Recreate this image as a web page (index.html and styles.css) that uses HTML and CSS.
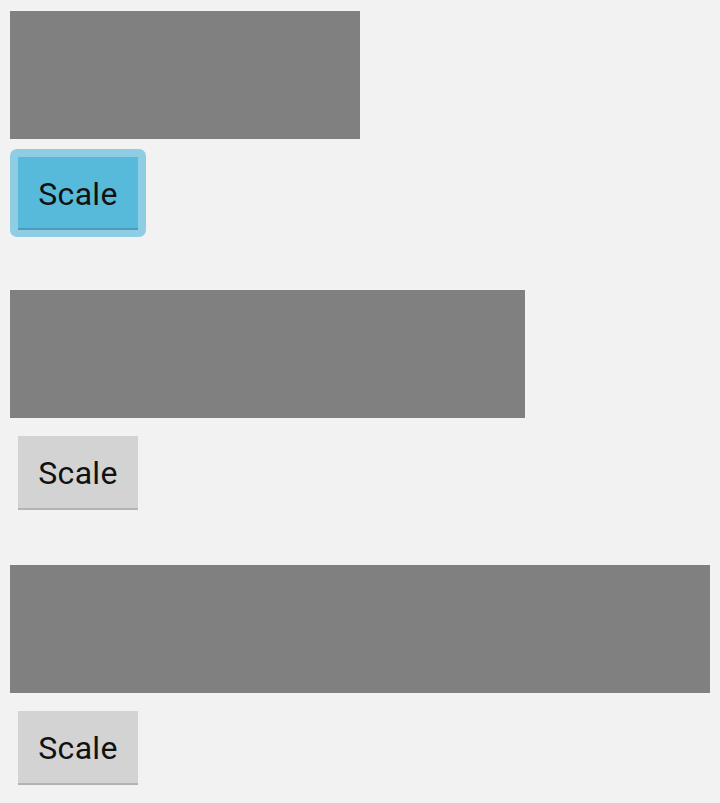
FILE: index.html
```html
<!DOCTYPE html>
<html>
<head>
<meta charset="utf-8">
<link rel="stylesheet" href="styles.css">
</head>
<body>
<div class="page">
  <div class="item item-first">
    <div class="box box-a"></div>
    <button class="btn btn-focused">Scale</button>
  </div>
  <div class="item item-second">
    <div class="box box-b"></div>
    <button class="btn">Scale</button>
  </div>
  <div class="item item-third">
    <div class="box box-c"></div>
    <button class="btn">Scale</button>
  </div>
</div>
</body>
</html>
```
FILE: styles.css
```css
html, body {
  margin: 0;
  padding: 0;
  background: #f2f2f2;
}
.page {
  display: flex;
  flex-direction: column;
  padding: 11px 10px 0 10px;
  font-family: Roboto, "Liberation Sans", sans-serif;
}
.item {
  display: flex;
  flex-direction: column;
  align-items: flex-start;
}
.item-second { margin-top: 60px; }
.item-third { margin-top: 55px; }
.box {
  height: 128px;
  background: #808080;
}
.box-a { width: 350px; }
.box-b { width: 515px; }
.box-c { width: 700px; }
.btn {
  position: relative;
  margin: 18px 0 0 8px;
  width: 120px;
  height: 74px;
  padding: 2px 0 0 0;
  border: none;
  border-bottom: 2px solid #b3b3b3;
  background: #d3d3d3;
  color: #111;
  font-family: Roboto, "Liberation Sans", sans-serif;
  font-size: 32px;
  line-height: 1;
  letter-spacing: 0.3px;
}
.btn-focused {
  height: 73px;
  background: #58badb;
  border-bottom-color: #4a9dba;
}
.btn-focused::before {
  content: "";
  position: absolute;
  left: -8px;
  right: -8px;
  top: -8px;
  bottom: -9px;
  border-radius: 7px;
  background: #8ecde3;
  z-index: -1;
}
.item-first { position: relative; z-index: 0; }
```
